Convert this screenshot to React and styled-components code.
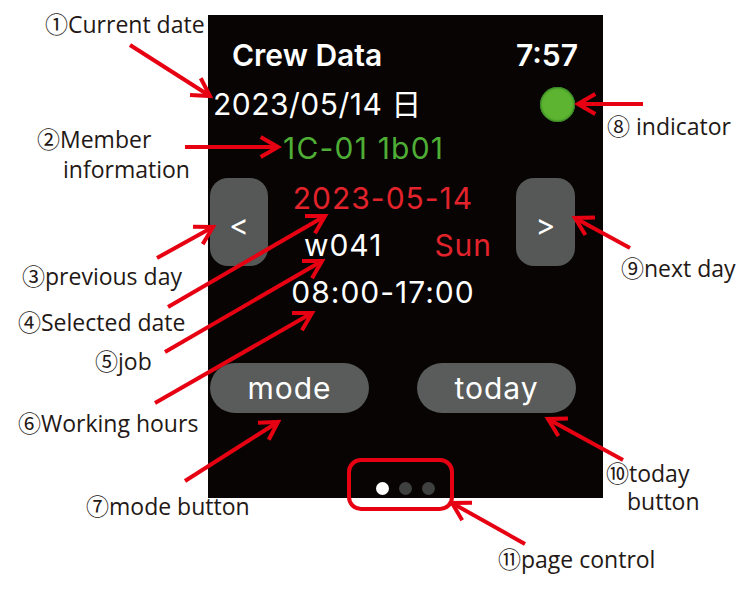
import React from 'react'
import styled, { createGlobalStyle } from 'styled-components'

const GlobalStyle = createGlobalStyle`
  html, body {
    margin: 0;
    padding: 0;
    background: #ffffff;
  }
`

const RED = '#e60012'

const labels = [
  { n: '①', lines: ['Current date'], x: 45, y: 9 },
  { n: '②', lines: ['Member', 'information'], x: 37, y: 124, indent: 26 },
  { n: '③', lines: ['previous day'], x: 22, y: 261 },
  { n: '④', lines: ['Selected date'], x: 18, y: 307 },
  { n: '⑤', lines: ['job'], x: 95, y: 346 },
  { n: '⑥', lines: ['Working hours'], x: 18, y: 408 },
  { n: '⑦', lines: ['mode button'], x: 86, y: 491 },
  { n: '⑧', lines: [' indicator'], x: 607, y: 111 },
  { n: '⑨', lines: ['next day'], x: 621, y: 253 },
  { n: '⑩', lines: ['today', 'button'], x: 606, y: 459, indent: 21, tight: true },
  { n: '⑪', lines: ['page control'], x: 498, y: 544 },
]

const arrows = [
  { from: [130, 45], to: [210, 96] },
  { from: [185, 147], to: [278, 147] },
  { from: [157, 258], to: [213, 227] },
  { from: [168, 307], to: [325, 216] },
  { from: [165, 352], to: [322, 261] },
  { from: [155, 403], to: [312, 313] },
  { from: [185, 481], to: [278, 422] },
  { from: [643, 104], to: [578, 104] },
  { from: [630, 248], to: [575, 218] },
  { from: [623, 460], to: [548, 419] },
  { from: [525, 544], to: [452, 503] },
]

// open "V" arrow head at the tip of a callout line
function headPoints(from, to) {
  const dx = to[0] - from[0]
  const dy = to[1] - from[1]
  const len = Math.hypot(dx, dy)
  const ux = dx / len
  const uy = dy / len
  const L = 20
  const a = (30 * Math.PI) / 180
  const arm = (s) => {
    const rx = ux * Math.cos(a) - uy * Math.sin(a) * s
    const ry = ux * Math.sin(a) * s + uy * Math.cos(a)
    return [to[0] - L * rx, to[1] - L * ry]
  }
  const p1 = arm(1)
  const p2 = arm(-1)
  return `${p1[0]},${p1[1]} ${to[0]},${to[1]} ${p2[0]},${p2[1]}`
}

function Annotations() {
  return (
    <Overlay width="750" height="600" viewBox="0 0 750 600">
      {arrows.map((a, i) => (
        <g key={i} stroke={RED} strokeWidth="4" fill="none" strokeLinecap="butt" strokeLinejoin="miter">
          <line x1={a.from[0]} y1={a.from[1]} x2={a.to[0]} y2={a.to[1]} />
          <polyline points={headPoints(a.from, a.to)} />
        </g>
      ))}
      <rect x="349" y="460" width="103" height="49" rx="12" stroke={RED} strokeWidth="4" fill="none" />
    </Overlay>
  )
}

export default function App() {
  return (
    <>
      <GlobalStyle />
      <Page>
        <Screen>
          <Header>
            <Title>Crew Data</Title>
            <Title>7:57</Title>
          </Header>
          <DateRow>
            <CurrentDate>2023/05/14 日</CurrentDate>
            <Indicator />
          </DateRow>
          <Member>1C-01 1b01</Member>
          <DayNav>
            <NavButton>&lt;</NavButton>
            <DayInfo>
              <InfoLine $red>2023-05-14</InfoLine>
              <WeekRow>
                <InfoLine>w041</InfoLine>
                <InfoLine $red>Sun</InfoLine>
              </WeekRow>
              <InfoLine>08:00-17:00</InfoLine>
            </DayInfo>
            <NavButton>&gt;</NavButton>
          </DayNav>
          <Actions>
            <PillButton>mode</PillButton>
            <PillButton>today</PillButton>
          </Actions>
          <Dots>
            <Dot $active />
            <Dot />
            <Dot />
          </Dots>
        </Screen>

        <Annotations />

        {labels.map((l, i) => (
          <Label key={i} $x={l.x} $y={l.y} $tight={l.tight}>
            <div>{l.n}{l.lines[0]}</div>
            {l.lines[1] && <Indented $indent={l.indent}>{l.lines[1]}</Indented>}
          </Label>
        ))}
      </Page>
    </>
  )
}

const Page = styled.div`
  position: relative;
  width: 750px;
  height: 600px;
  overflow: hidden;
  background: #ffffff;
  padding-top: 15px;
  box-sizing: border-box;
`

const Screen = styled.div`
  box-sizing: border-box;
  width: 395px;
  height: 483px;
  margin-left: 208px;
  padding-top: 22px;
  background: #070403;
  display: flex;
  flex-direction: column;
  font-family: Inter, "Noto Sans CJK JP", sans-serif;
  color: #ffffff;
  font-size: 30px;
  line-height: 36px;
`

const Header = styled.div`
  display: flex;
  justify-content: space-between;
  padding: 0 25px 0 24px;
`

const Title = styled.div`
  font-weight: 600;
`

const DateRow = styled.div`
  display: flex;
  justify-content: space-between;
  align-items: center;
  margin-top: 13px;
  padding: 0 28px 0 5px;
  height: 36px;
`

const CurrentDate = styled.div`
  letter-spacing: 0.5px;
`

const Indicator = styled.div`
  width: 35px;
  height: 35px;
  border-radius: 50%;
  background: #5db431;
  box-shadow: inset 0 0 2px 1px #2f7a22;
`

const Member = styled.div`
  margin-top: 8px;
  padding-left: 75px;
  color: #4fae36;
  letter-spacing: 1.2px;
`

const DayNav = styled.div`
  display: grid;
  grid-template-columns: 58px 1fr 59px;
  margin-top: 12px;
  padding: 0 28px 0 2px;
`

const NavButton = styled.div`
  height: 88px;
  border-radius: 18px;
  background: #555857;
  display: flex;
  align-items: center;
  justify-content: center;
  padding-top: 6px;
  box-sizing: border-box;
`

const DayInfo = styled.div`
  display: flex;
  flex-direction: column;
  align-items: center;
  gap: 11px;
  padding: 2px 18px 0 0;
`

const WeekRow = styled.div`
  display: flex;
  gap: 52px;
  margin-left: 30px;
`

const InfoLine = styled.div`
  color: ${(p) => (p.$red ? '#e3232b' : '#ffffff')};
  letter-spacing: 1px;
`

const Actions = styled.div`
  display: flex;
  justify-content: space-between;
  margin-top: 53px;
  padding: 0 27px 0 2px;
`

const PillButton = styled.div`
  width: 159px;
  height: 50px;
  border-radius: 25px;
  background: #5a5c5b;
  display: flex;
  align-items: center;
  justify-content: center;
  letter-spacing: 1px;
`

const Dots = styled.div`
  margin-top: auto;
  padding-bottom: 3px;
  display: flex;
  justify-content: center;
  gap: 10px;
`

const Dot = styled.div`
  width: 13px;
  height: 13px;
  border-radius: 50%;
  background: ${(p) => (p.$active ? '#ffffff' : '#3f4140')};
`

const Overlay = styled.svg`
  position: absolute;
  left: 0;
  top: 0;
  pointer-events: none;
`

const Label = styled.div`
  position: absolute;
  left: ${(p) => p.$x}px;
  top: ${(p) => p.$y}px;
  font-family: "Open Sans", "Noto Sans CJK JP", sans-serif;
  font-size: 23px;
  line-height: ${(p) => (p.$tight ? 28 : 30)}px;
  color: #231815;
  white-space: pre;
`

const Indented = styled.div`
  padding-left: ${(p) => p.$indent}px;
`
